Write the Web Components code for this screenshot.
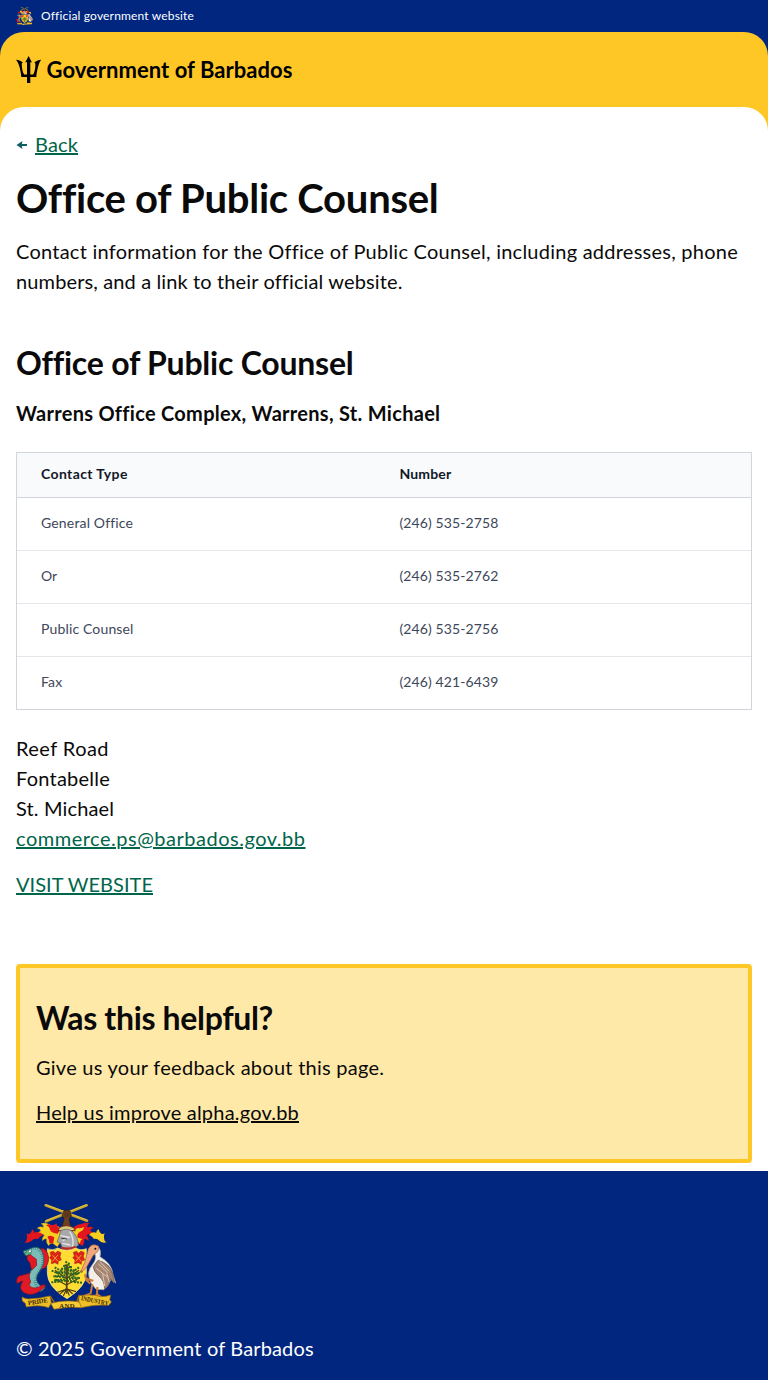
<!DOCTYPE html>
<html lang="en">
<head>
<meta charset="utf-8">
<title>Office of Public Counsel</title>
<style>
  body { margin: 0; font-family: Lato, "Open Sans", sans-serif; font-variant-ligatures: none; background: #fff; color: #0a0a0a; }
</style>
</head>
<body>
<gov-page></gov-page>
<script>
// One line of text; "track" is its letter-spacing in px.
customElements.define('text-line', class extends HTMLElement {
  connectedCallback() {
    this.attachShadow({ mode: 'open' }).innerHTML = `
      <style>:host{display:inline-block;white-space:nowrap;letter-spacing:${this.getAttribute('track') || 0}px}</style><slot></slot>`;
  }
});

customElements.define('coat-of-arms', class extends HTMLElement {
  connectedCallback() {
    const motto = this.hasAttribute('motto') ? `
      <g font-family="Liberation Serif, serif" font-weight="700" font-size="20" fill="#3a2a08">
        <text transform="translate(55 328) rotate(-9)" textLength="60">PRIDE</text>
        <text x="148" y="335" textLength="46">AND</text>
        <text transform="translate(212 312) rotate(12)" textLength="84" lengthAdjust="spacingAndGlyphs">INDUSTRY</text>
      </g>` : '';
    this.attachShadow({ mode: 'open' }).innerHTML = `
    <style>:host{display:block;flex:none}svg{display:block;width:100%;height:100%}</style>
    <svg viewBox="18 21 300 321" preserveAspectRatio="none" aria-hidden="true">
      <path d="M107 28L231 74M108 76L230 28" stroke="#c9a52c" stroke-width="8" stroke-linecap="round"/>
      <path d="M107 26L231 72M108 74L230 26" stroke="#f0d04a" stroke-width="2"/>
      <path d="M161 46q10-8 20 0l3 14-7 9 6 26h-27l6-27-6-10z" fill="#6b3f1f" stroke="#2c1a0c" stroke-width="2"/>
      <path d="M166 50v14M172 49v15M177 51v11" stroke="#33200f" stroke-width="1.5"/>
      <path d="M152 96q-12-10-24-3-18-16-35-10 9 4 7 11-10-4-19 3 10 1 11 8-8 3-10 10 15-4 21 3-8 8-6 16 7-7 13-5-2 12 6 20 4-9 12-7l14 10 16-24z" fill="#f5cf1e" stroke="#c9a21a"/>
      <path d="M100 117q-12-13-28-7 2-6-6-10 0 9-7 13-6 3-10-1 5 10 1 19-1 6-8 8 14 3 22-4 8-9 20-6 4-8 16-12z" fill="#e3161d"/>
      <path d="M140 82q-9 8-17 4-9-4-14 3 10 2 10 11 6 13 24 13l10-15q-12-2-13-16zM112 122q10-7 21 2l-4 21q-5-6-11-3 0-13-6-20z" fill="#e3161d"/>
      <path d="M190 96q12-12 22-11 13-8 27-3-9 5-6 12 10-5 18 2-10 2-10 9 9 3 11 10-16-5-22 3 7 8 6 17-8-8-14-5 3 12-6 21-5-9-13-7l-16 11-8-24z" fill="#e3161d"/>
      <path d="M237 117q8-12 22-7-1-6 7-10 1 9 8 13 6 3 10-1-5 10-1 19 0 5 7 8-14 3-21-4-8-9-17-6-5-9-15-12z" fill="#f5cf1e"/>
      <path d="M203 96q10 3 19-4-1 12-12 15-11 7-7 18l14 4q-7 4-7 14l-13-13-9-24z" fill="#f5cf1e"/>
      <path d="M148 95q20-12 43 0l5 9h-52z" fill="#d8c77a" stroke="#7b2a18" stroke-width="3"/>
      <path d="M152 104q18-9 34 1 18 16 19 43l-14 10-34-2-6-15-10-3 6-15z" fill="#a9a9ab" stroke="#5e6064" stroke-width="2"/>
      <path d="M151 119l26 5-19 10M179 107q15 20 8 49M157 142l24 5" fill="none" stroke="#e4e4e4" stroke-width="4"/>
      <path d="M154 127l18 2" stroke="#35363a" stroke-width="3"/>
      <path d="M152 151q20 8 44-2l4 8q-25 10-47 2z" fill="#b52a23"/>
      <path d="M112 158q17 8 31-2 26 14 55 0 12 9 31 2v73q0 41-58 77-59-35-59-77z" fill="#ffdd32" stroke="#fff0a0" stroke-width="2"/>
      <g fill="#e2231a" stroke="#8d2613" stroke-width="1.500">
        <path d="M120 169l10-3 6 6 7-7 10 5-3 12 4 10-9 3-1 10-9-5-11 3 1-11-7-7 5-5z"/>
        <path d="M190 169l10-3 6 6 7-7 10 5-3 12 4 10-9 3-1 10-9-5-11 3 1-11-7-7 5-5z"/>
      </g>
      <path d="M128 178l16 18m-17 0l17-19M198 178l16 18m-17 0l17-19" stroke="#efa12d" stroke-width="3"/>
      <path d="M170 290l1-79M170 248l-35-25M170 247l37-24M170 268l-34-19M170 266l33-17M148 296l22-19 18 17M160 300l10-22 8 21M170 279l-28 10M171 279l27 8" fill="none" stroke="#4b3b12" stroke-width="3.500"/>
      <g fill="none" stroke="#2c6524" stroke-width="6" stroke-dasharray="6 3">
        <path d="M166 197l14 8-20 5 26 3-34 6 44 4-58 7 67 3-75 8 80 5-78 7 68 3M125 224l24 10M217 225l-29 16M134 214l20 11M207 214l-22 16M124 259l25-2M216 260l-24-2"/>
      </g>
      <path d="M170 205v88" stroke="#57441a" stroke-width="5"/>
      <path d="M80 166q22-19 33 6 8 24-7 43l-19 7q13-26-3-48z" fill="#e11b25" stroke="#7c1520" stroke-width="2"/>
      <path d="M58 159q29-15 39 10 12 31-8 56-15 19-6 35 7 13 23 12-10 22-37 11-30-14-12-49 20-29 4-54-9-13-19-8l-3-6z" fill="#7cbcb8" stroke="#175b5f" stroke-width="2.500"/>
      <path d="M63 159q22-8 32 16 11 25-8 52-20 31-5 45" fill="none" stroke="#2b6d70" stroke-width="9" stroke-dasharray="1.500 5"/>
      <path d="M43 174l11-13 10 4-2 10-13 5z" fill="#5fb07f" stroke="#175b5f" stroke-width="2"/>
      <circle cx="60" cy="166" r="3" fill="#fff"/>
      <path d="M54 177q-8 14 5 22l6 24 15-15-1-18-17-13zM59 232l-34 9q-9 13-3 22 9-8 17-8-17 24 5 36 22 11 46-7 12-6 17-17-12-2-20 6-22 8-30-7 8-5 2-17-4-13 2-20z" fill="#e11b25" stroke="#85111f" stroke-width="2"/>
      <path d="M236 160q10-20 29-8 10 12 5 30 35 20 39 53l8 26q-8-1-14-13-5 22-22 33l-23-1-15-20q-16-31 4-54 14-17 8-31z" fill="#f3efe8" stroke="#b5a894" stroke-width="2"/>
      <path d="M264 193q35 9 43 38l7 30-13-13q-3 22-17 31-1-26-17-38-17-15-17-29z" fill="#a58570" stroke="#5e4b45" stroke-width="2"/>
      <path d="M265 203l28 28M257 216l35 27M269 196l28 30M278 233l6 37M290 232l8 26" stroke="#dac9bc" stroke-width="3"/>
      <path d="M266 151q-20-12-31 8l-11 41-13 29q11-5 19-16l20-35 14-12z" fill="#f0a77b" stroke="#a85737" stroke-width="2"/>
      <circle cx="256" cy="158" r="3" fill="#151515"/>
      <path d="M227 234q-5 8 6 16l17 4M226 250l15 13M247 264l-5 28-17 7M262 273l-1 25-22 6M258 293l14 9" fill="none" stroke="#d27b36" stroke-width="6"/>
      <path d="M36 303q8 5 18 6 34-1 66-9l4 20-8 15q-26-10-67-2l-3-11-9-7z" fill="#efbf27" stroke="#9b6a0f" stroke-width="2"/>
      <path d="M207 299q40-5 60 2 20 2 35-4l-3 14 5 7-8 10q-40-4-84 7l-6-16z" fill="#efbf27" stroke="#9b6a0f" stroke-width="2"/>
      <path d="M120 300l14 20M207 298l-7 20" stroke="#9b6a0f" stroke-width="4"/>
      <path d="M122 322q46-12 86-4l6 17q-40-4-82 5z" fill="#f5ca32" stroke="#9b6a0f" stroke-width="2"/>
      ${motto}
    </svg>`;
  }
});

customElements.define('trident-icon', class extends HTMLElement {
  connectedCallback() {
    this.attachShadow({ mode: 'open' }).innerHTML = `
    <style>:host{display:block;width:26px;height:28px;flex:none}svg{display:block}</style>
    <svg width="26" height="28" viewBox="0 0 26 28" aria-hidden="true">
      <path d="M12.600 0L16 6.400l-1.700-.4v12.400h2.900c1.400-2.500 2.100-6 2.200-9.500.1-1.500-.2-2.100-1.200-1.900 1-1.700 4.400-3 7-3.200-1.700 2.400-2.700 5-3.400 8.300-.6 2.700-1.200 5.200-1.500 9H14.300v5.900h-3.300v-5.900H5.300c-.3-3.800-.9-6.300-1.500-9-.7-3.300-2-5.900-3.800-8.300 2.600.2 6 1.500 7 3.200-1-.2-1.300.4-1.200 1.900.1 3.500.9 7 2.300 9.500H11V6l-1.800.4z" fill="#000"/>
    </svg>`;
  }
});

customElements.define('official-bar', class extends HTMLElement {
  connectedCallback() {
    this.attachShadow({ mode: 'open' }).innerHTML = `
    <style>:host{display:flex;align-items:center;gap:8px;height:32px;padding:0 16px;background:#00267f;color:#fff;font-size:12px;line-height:18px;box-sizing:border-box}
    coat-of-arms{width:17px;height:18px}</style>
    <coat-of-arms></coat-of-arms><slot></slot>`;
  }
});

customElements.define('site-header', class extends HTMLElement {
  connectedCallback() {
    this.attachShadow({ mode: 'open' }).innerHTML = `
    <style>:host{display:block;background:#00267f}
    .bar{display:flex;align-items:flex-start;gap:4.500px;height:99px;padding:24px 16px 0;box-sizing:border-box;background:#ffc726;border-radius:24px 24px 0 0;font-size:22px;font-weight:700;line-height:28px;color:#000}</style>
    <div class="bar"><trident-icon></trident-icon><slot></slot></div>`;
  }
});

customElements.define('text-link', class extends HTMLElement {
  connectedCallback() {
    this.attachShadow({ mode: 'open' }).innerHTML = `
    <style>:host{display:inline-block;color:var(--link,#00654a)}
    a{color:inherit;text-decoration:underline;text-decoration-thickness:2px;text-underline-offset:1px;letter-spacing:${this.getAttribute('track') || 0}px}</style>
    <a href="#"><slot></slot></a>`;
  }
});

customElements.define('contact-table', class extends HTMLElement {
  connectedCallback() {
    const rows = [['General Office', '(246) 535-2758', .16], ['Or', '(246) 535-2762', 0], ['Public Counsel', '(246) 535-2756', .15], ['Fax', '(246) 421-6439', .2]];
    this.attachShadow({ mode: 'open' }).innerHTML = `
    <style>:host{display:block;border:1px solid #d1d5db;font-size:14px;line-height:20px;color:#3d4759}
    .row{display:grid;grid-template-columns:358.500px 1fr;padding:15px 24px 17px;border-top:1px solid #e5e7eb}
    .head{padding:11px 24px 13px;background:#f9fafb;border-top:0;border-bottom:1px solid #d1d5db;color:#101828;font-weight:700}
    .head + .row{border-top:0}</style>
    <div class="row head"><span><text-line track=".38">Contact Type</text-line></span><span><text-line track=".16">Number</text-line></span></div>
    ${rows.map(r => `<div class="row"><span><text-line track="${r[2]}">${r[0]}</text-line></span><span><text-line track=".1">${r[1]}</text-line></span></div>`).join('')}`;
  }
});

customElements.define('feedback-panel', class extends HTMLElement {
  connectedCallback() {
    this.attachShadow({ mode: 'open' }).innerHTML = `
    <style>:host{display:block;box-sizing:border-box;height:199px;padding:30px 16px 0;border:4px solid #ffc726;border-radius:4px;background:#ffe9a8;--link:#0a0a0a}
    h2{margin:0 0 14px;font-size:32px;line-height:40px}p{margin:0 0 15px}h2 text-line,p text-line,text-link{display:block}</style>
    <h2><text-line track="-.343">Was this helpful?</text-line></h2>
    <p><text-line track=".26">Give us your feedback about this page.</text-line></p>
    <text-link track=".2">Help us improve alpha.gov.bb</text-link>`;
  }
});

customElements.define('site-footer', class extends HTMLElement {
  connectedCallback() {
    this.attachShadow({ mode: 'open' }).innerHTML = `
    <style>:host{display:flex;flex-direction:column;gap:23px;align-items:flex-start;box-sizing:border-box;height:209px;padding:32px 16px 0;background:#00267f;color:#fff;font-size:20px;line-height:30px}
    coat-of-arms{width:100px;height:107px}</style>
    <coat-of-arms motto></coat-of-arms><slot></slot>`;
  }
});

customElements.define('gov-page', class extends HTMLElement {
  connectedCallback() {
    this.attachShadow({ mode: 'open' }).innerHTML = `
    <style>:host{display:block;font-size:20px;line-height:30px}
    main{display:block;box-sizing:border-box;height:1064px;margin-top:-24px;padding:0 16px}
    .sheet{position:relative;background:#fff;border-radius:24px 24px 0 0}
    .back{display:flex;align-items:center;gap:7px;padding-top:22px}
    h1{margin:15px 0 14px;font-size:40px;line-height:48px}
    h2{margin:47px 0 15px;font-size:32px;line-height:40px}
    h3{margin:0 0 24px;font-size:20px;line-height:30px}
    p{margin:0}
    text-line,p text-link{display:block}
    contact-table{margin-bottom:23px}
    .visit{margin:16px 0 65px}
    </style>
    <official-bar><text-line track=".165">Official government website</text-line></official-bar>
    <site-header><text-line track=".045">Government of Barbados</text-line></site-header>
    <main class="sheet">
      <div class="back"><svg width="12" height="10" viewBox="0 0 12 10" aria-hidden="true"><path d="M.500 6L6.500 2 5.800 5H11v2H5.800l.7 3z" fill="#0e5f64"/></svg><text-link track=".14">Back</text-link></div>
      <h1><text-line track="-.26">Office of Public Counsel</text-line></h1>
      <p><text-line track=".244">Contact information for the Office of Public Counsel, including addresses, phone</text-line>
      <text-line track=".128">numbers, and a link to their official website.</text-line></p>
      <h2><text-line track="-.23">Office of Public Counsel</text-line></h2>
      <h3><text-line track=".29">Warrens Office Complex, Warrens, St. Michael</text-line></h3>
      <contact-table></contact-table>
      <p><text-line track=".44">Reef Road</text-line><text-line track=".24">Fontabelle</text-line><text-line track=".14">St. Michael</text-line><text-link track=".506">commerce.ps@barbados.gov.bb</text-link></p>
      <p class="visit"><text-link track=".026">VISIT WEBSITE</text-link></p>
      <feedback-panel></feedback-panel>
    </main>
    <site-footer><text-line track=".15">© 2025 Government of Barbados</text-line></site-footer>`;
  }
});
</script>
</body>
</html>
